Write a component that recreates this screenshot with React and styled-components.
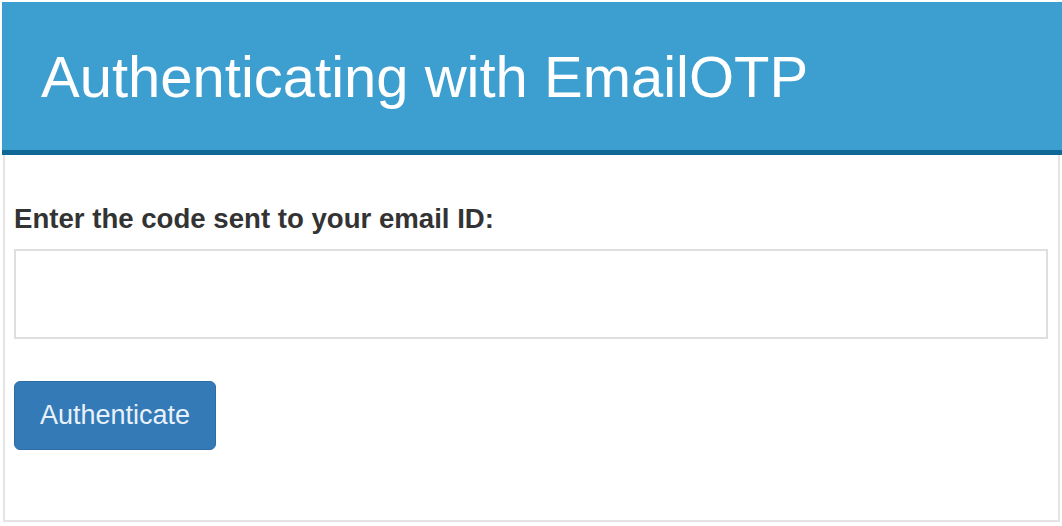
import React from 'react';
import styled, { createGlobalStyle } from 'styled-components';

const GlobalStyle = createGlobalStyle`
  html, body {
    margin: 0;
    padding: 0;
    background: #ffffff;
  }
  body {
    font-family: "Liberation Sans", Arial, sans-serif;
    color: #333333;
  }
`;

const Page = styled.div`
  width: 1062px;
  height: 526px;
  padding-top: 2px;
  box-sizing: border-box;
  overflow: hidden;
`;

const Header = styled.div`
  margin-left: 2px;
  height: 153px;
  box-sizing: border-box;
  background: #3d9fd0;
  border-bottom: 5px solid #0f6896;
  display: flex;
  align-items: center;
  padding: 3px 0 0 39px;
`;

const Title = styled.h1`
  margin: 0;
  font-size: 58px;
  font-weight: 400;
  color: #ffffff;
  line-height: 1.15;
`;

const Body = styled.div`
  margin-left: 3px;
  width: 1057px;
  height: 367px;
  box-sizing: border-box;
  border: 2px solid #e4e4e4;
  border-top: none;
  padding: 48px 10px 0 9px;
  display: flex;
  flex-direction: column;
  align-items: flex-start;
`;

const Label = styled.label`
  font-size: 27.6px;
  font-weight: 700;
  color: #333333;
  line-height: 31px;
  margin-bottom: 15px;
`;

const Input = styled.input`
  width: 100%;
  height: 90px;
  box-sizing: border-box;
  border: 2px solid #dfdfdf;
  border-radius: 0;
  background: #ffffff;
  font-family: inherit;
  font-size: 27px;
  padding: 0 16px;
  outline: none;
`;

const Button = styled.button`
  margin-top: 42px;
  width: 202px;
  height: 69px;
  border: 1px solid #2e6da4;
  border-radius: 6px;
  background: #337ab7;
  color: #e8f1fa;
  font-family: inherit;
  font-size: 27px;
  padding: 0;
  cursor: pointer;
`;

export default function App() {
  return (
    <>
      <GlobalStyle />
      <Page>
        <Header>
          <Title>Authenticating with EmailOTP</Title>
        </Header>
        <Body>
          <Label htmlFor="otp">Enter the code sent to your email ID:</Label>
          <Input id="otp" type="text" />
          <Button type="button">Authenticate</Button>
        </Body>
      </Page>
    </>
  );
}
